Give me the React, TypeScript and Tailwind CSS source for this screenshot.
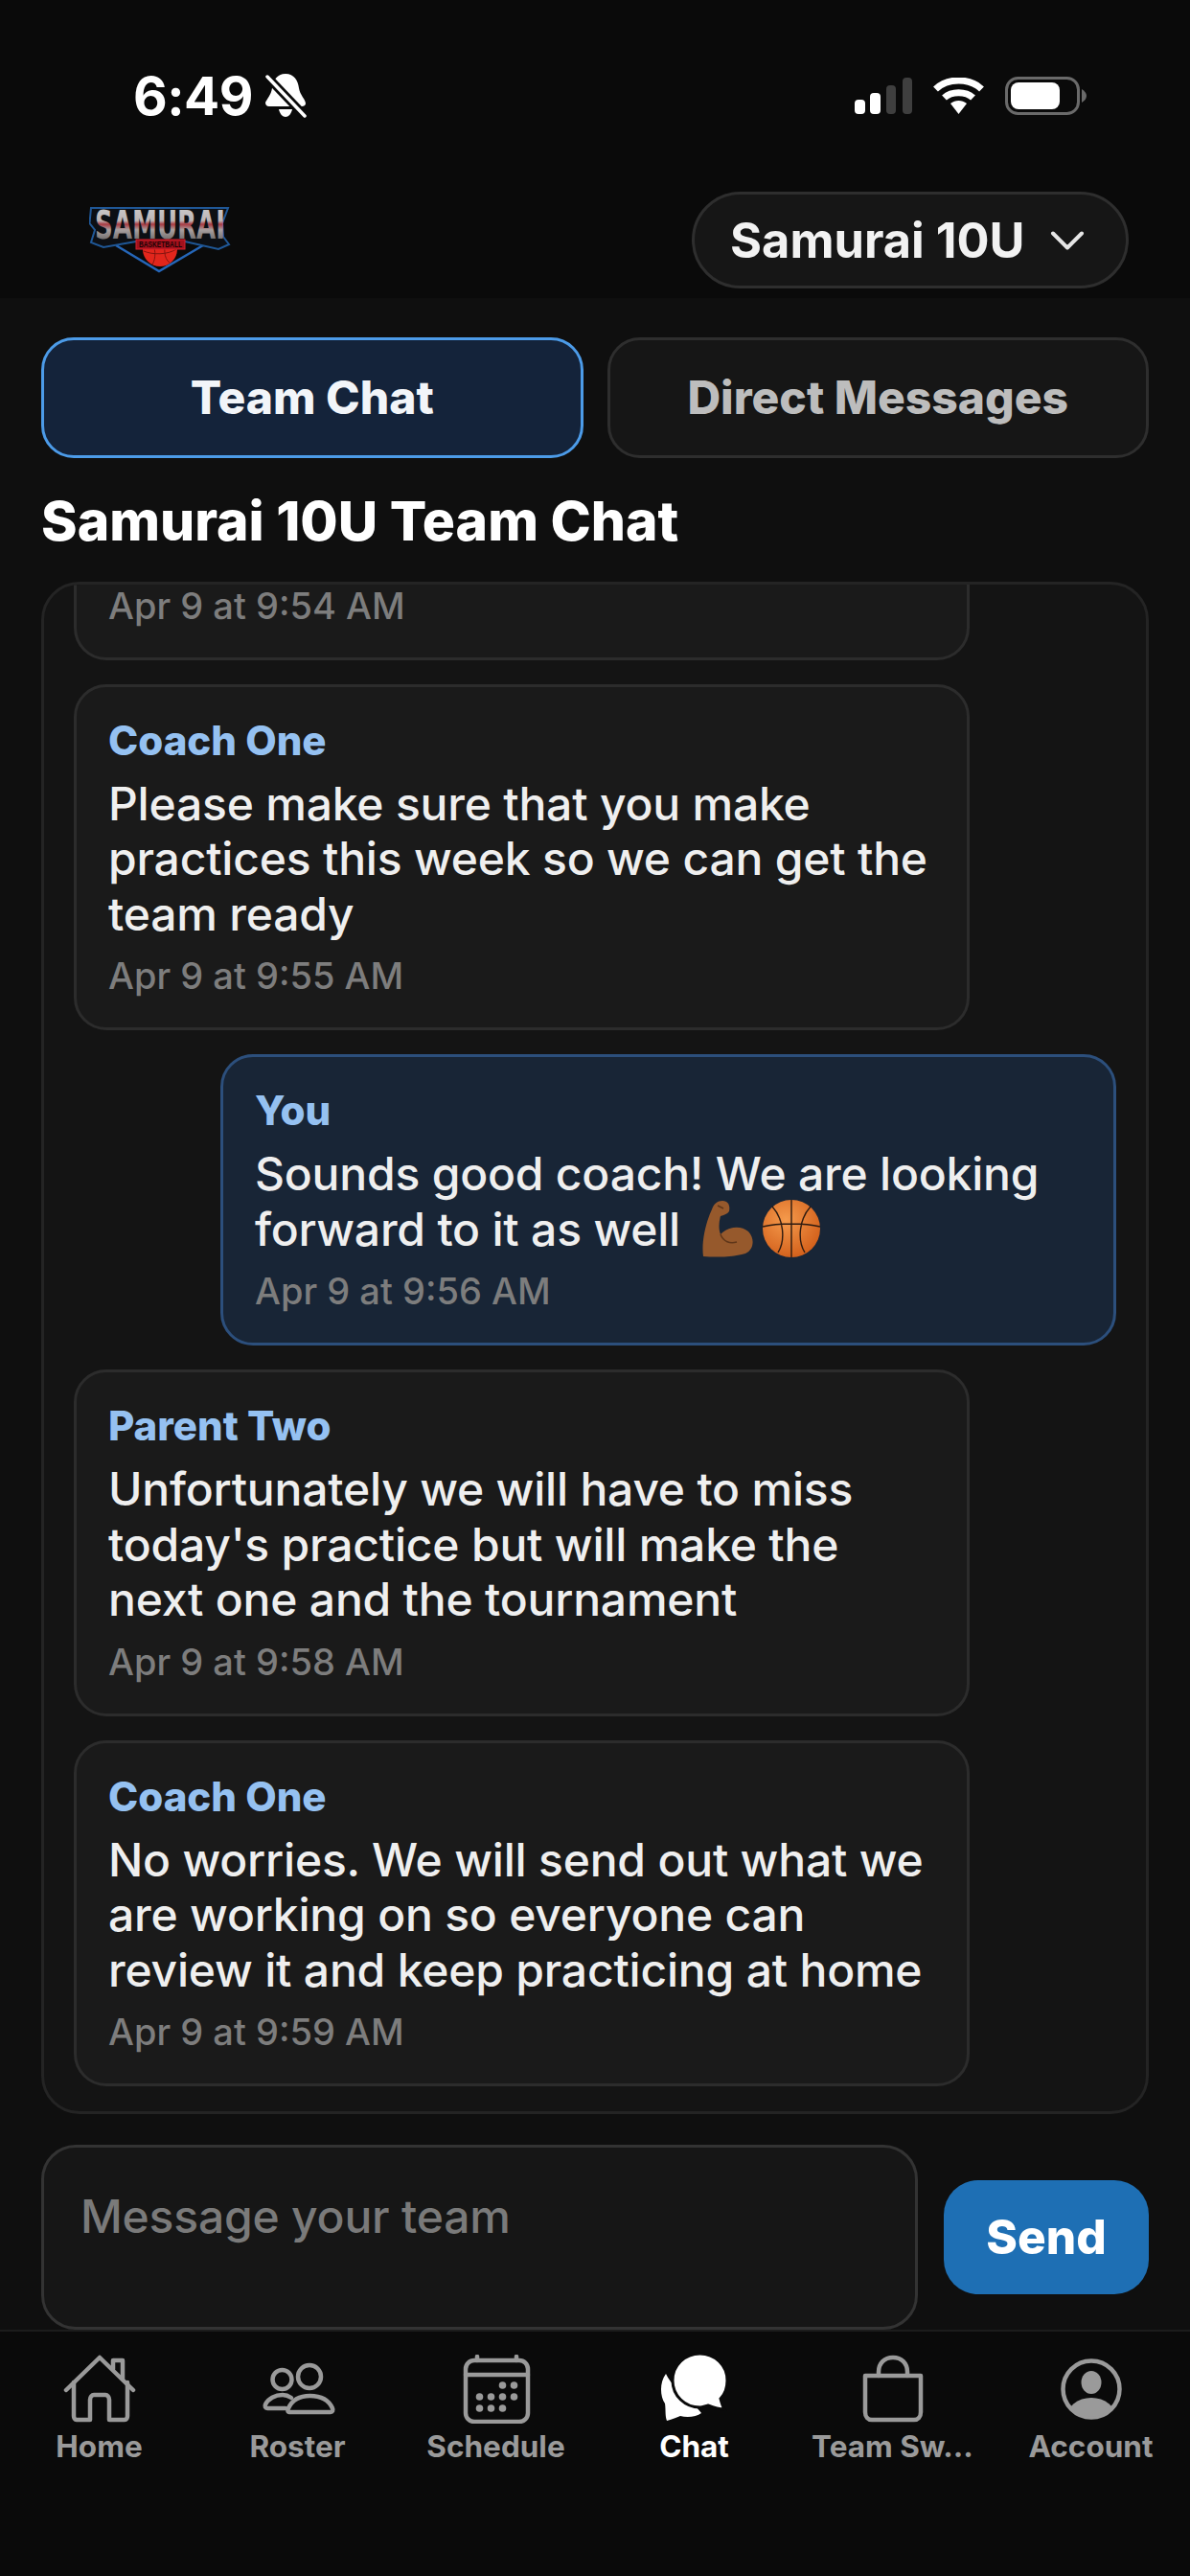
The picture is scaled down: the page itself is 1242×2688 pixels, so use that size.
import { ChevronDown } from "lucide-react";

const FONT = "font-['Inter','Noto_Sans',sans-serif]";

type Msg = {
  sender?: string;
  lines?: string;
  time: string;
  mine?: boolean;
  emoji?: boolean;
};

const MESSAGES: Msg[] = [
  { time: "Apr 9 at 9:54 AM" },
  { sender: "Coach One", lines: "Please make sure that you make practices this week so we can get the team ready", time: "Apr 9 at 9:55 AM" },
  { sender: "You", lines: "Sounds good coach! We are looking forward to it as well ", time: "Apr 9 at 9:56 AM", mine: true, emoji: true },
  { sender: "Parent Two", lines: "Unfortunately we will have to miss today's practice but will make the next one and the tournament", time: "Apr 9 at 9:58 AM" },
  { sender: "Coach One", lines: "No worries. We will send out what we are working on so everyone can review it and keep practicing at home", time: "Apr 9 at 9:59 AM" },
];

function Logo() {
  return (
    <svg width="148" height="70" viewBox="0 0 148 70" fill="none">
      <defs>
        <linearGradient id="samurai-fill" x1="0" y1="0" x2="0" y2="1">
          <stop offset="0" stopColor="#cfcfcf" />
          <stop offset="0.4" stopColor="#bdb6b6" />
          <stop offset="0.48" stopColor="#a83a42" />
          <stop offset="0.6" stopColor="#a8a0a0" />
          <stop offset="1" stopColor="#444444" />
        </linearGradient>
      </defs>
      <path d="M28 40 L73 67 L119 40" stroke="#2566b8" strokeWidth="2.5" />
      <circle cx="74" cy="44" r="18" fill="#e2261c" />
      <path d="M57 46 C66 50 82 50 91 44 M64 33 C70 42 70 54 66 60 M82 33 C77 42 78 54 84 58" stroke="#7c130e" strokeWidth="0.9" />
      <path
        d="M2 1 H145 L139 17 L140 31 L146 39 L135 44 L100 36 H49 L15 42 L2 37 L6 24 L0.5 17 Z"
        fill="#0c0f14"
        stroke="#1f5796"
        strokeWidth="2"
      />
      <text
        x="6"
        y="33"
        textLength="136"
        lengthAdjust="spacingAndGlyphs"
        fontFamily="'DejaVu Sans', sans-serif"
        fontWeight="700"
        fontSize="41"
        fill="url(#samurai-fill)"
      >
        SAMURAI
      </text>
      <rect x="49" y="34" width="51" height="10" fill="#a3111c" stroke="#d4202c" strokeWidth="1" />
      <text
        x="52"
        y="42"
        textLength="45"
        lengthAdjust="spacingAndGlyphs"
        fontFamily="'Liberation Sans', sans-serif"
        fontWeight="700"
        fontSize="8.5"
        fill="#1a0305"
      >
        BASKETBALL
      </text>
    </svg>
  );
}

function StatusBar() {
  return (
    <div className="flex h-[200px] items-center justify-between pl-[139px] pr-[108px]">
      <div className="flex items-center gap-[12px]">
        <span className="text-[55px] leading-none font-bold tracking-[-0.5px] text-white">6:49</span>
        <svg width="44" height="46" viewBox="0 0 44 46" className="fill-white">
          <path d="M22 0 C31 0 35 7 36 15 C37 22 43 27 43 31 C43 33 41 34 39 34 H5 C2 34 1 32 1 30 C2 27 7 22 8 15 C9 7 13 0 22 0 Z" />
          <path d="M15 37 H29 C28 42 25 45 22 45 C19 45 16 42 15 37 Z" />
          <path d="M2 2 L42 44" stroke="#0a0a0a" strokeWidth="9" />
          <path d="M3 3 L42 44" stroke="white" strokeWidth="3.5" strokeLinecap="round" />
        </svg>
      </div>
      <div className="flex items-center gap-[22px]">
        <svg width="60" height="38" viewBox="0 0 60 38">
          <rect x="0" y="23" width="11" height="15" rx="4" fill="#fff" />
          <rect x="16" y="16" width="11" height="22" rx="4" fill="#fff" />
          <rect x="33" y="8" width="10" height="30" rx="4" fill="#3f3f3f" />
          <rect x="50" y="0" width="10" height="38" rx="4" fill="#3f3f3f" />
        </svg>
        <svg width="53" height="38" viewBox="0 0 53 38" fill="none" stroke="#fff" strokeWidth="7">
          <path d="M2.5 12 C15 0 38 0 50.5 12" />
          <path d="M11.5 21 C19 14 34 14 41.5 21" />
          <path d="M18 27 C23 23 30 23 35 27 L26.5 38 Z" fill="#fff" strokeWidth="0" />
        </svg>
        <svg width="85" height="40" viewBox="0 0 85 40">
          <rect x="1.5" y="1.5" width="75" height="37" rx="12" fill="none" stroke="#6a6a6a" strokeWidth="3" />
          <rect x="6" y="6" width="51" height="28" rx="8" fill="#fff" />
          <path d="M80 13 C83 15 85 17 85 20 C85 23 83 25 80 27 Z" fill="#6a6a6a" />
        </svg>
      </div>
    </div>
  );
}

function Bicep() {
  return (
    <svg width="56" height="60" viewBox="0 0 56 60" className="inline-block align-middle">
      <path
        d="M3 59 C1 45 5 25 12 10 C14 4 18 1 23 1 C30 1 31 7 30 12 C28 15 24 16 21 17 C19 24 19 31 21 36 C28 28 42 26 50 33 C57 40 56 52 47 56 C33 60 16 60 3 59 Z"
        fill="#96592c"
      />
      <path d="M21 36 C24 44 31 46 38 44 M18 6 L24 9" stroke="#5f3619" strokeWidth="1.5" fill="none" />
    </svg>
  );
}

function Ball() {
  return (
    <svg width="60" height="60" viewBox="0 0 60 60" className="inline-block align-middle">
      <defs>
        <radialGradient id="ball-fill" cx="0.4" cy="0.35" r="0.75">
          <stop offset="0" stopColor="#f59a4c" />
          <stop offset="1" stopColor="#cf5a16" />
        </radialGradient>
      </defs>
      <circle cx="30" cy="30" r="30" fill="url(#ball-fill)" />
      <path
        d="M30 0 V60 M0 28 C16 24 44 24 60 28 M10 7 C22 20 24 42 16 55 M50 7 C38 20 36 42 44 55"
        stroke="#2c1a10"
        strokeWidth="1.4"
        fill="none"
      />
    </svg>
  );
}

function Bubble({ msg }: { msg: Msg }) {
  return (
    <div
      className={`w-[935px] shrink-0 rounded-[34px] border-[3px] px-[33px] pt-[28px] pb-[29px] ${
        msg.mine
          ? "self-end border-[#2c4f7c] bg-[#182536]"
          : "self-start border-[#2c2c2c] bg-[#1a1a1a]"
      }`}
    >
      {msg.sender ? (
        <>
          <div className="text-[42px] leading-[56px] font-extrabold text-[#95c1f1]">{msg.sender}</div>
          <div className="mt-[9px] text-[48px] leading-[57.5px] font-[450] tracking-[-0.2px] text-[#efefef]">
            {msg.lines}
            {msg.emoji && (
              <span className="ml-[8px] inline-flex h-[57px] items-center gap-[9px] align-top">
                <Bicep />
                <Ball />
              </span>
            )}
          </div>
        </>
      ) : (
        <div className="h-[100px]" />
      )}
      <div className="mt-[11px] text-[38px] leading-[50px] font-medium text-[#7d7d7d]">{msg.time}</div>
    </div>
  );
}

const iconStroke = {
  fill: "none",
  stroke: "#9a9a9a",
  strokeWidth: 4.5,
  strokeLinecap: "round" as const,
  strokeLinejoin: "round" as const,
};

function HomeIcon() {
  return (
    <svg width="80" height="72" viewBox="0 0 80 72" {...iconStroke}>
      <path d="M5 37 L40 3 L75 37" />
      <path d="M13 29 V64 C13 66 14 68 16 68 H30 V47 C30 44 32 42 34 42 H46 C48 42 50 44 50 47 V68 H66 C68 68 69 66 69 64 V29" />
      <path d="M54 15 V6 H64 V25" />
    </svg>
  );
}

function RosterIcon() {
  return (
    <svg width="80" height="72" viewBox="0 0 80 72" {...iconStroke}>
      <circle cx="23.5" cy="26" r="10" />
      <circle cx="52" cy="23" r="12" />
      <path d="M31 60 H74 C76 60 77 58 76 56 C72 47 63 43 52.5 43 C42 43 34 47 30 56 C29 58 29 60 31 60 Z" />
      <path d="M33 45 C30 43 27 42 24 42 C16 42 9 46 6 52 C5 54 6 56 8 56 H27" />
    </svg>
  );
}

function ScheduleIcon() {
  const dots = [
    [46.5, 32], [58.5, 32],
    [22.5, 44], [34.5, 44], [46.5, 44], [58.5, 44],
    [22.5, 56], [34.5, 56], [46.5, 56],
  ];
  return (
    <svg width="80" height="72" viewBox="0 0 80 72" {...iconStroke}>
      <rect x="8" y="6" width="65" height="64" rx="9" />
      <path d="M8 21 H73 M20 2 V6 M61 2 V6" />
      {dots.map(([cx, cy]) => (
        <circle key={`${cx}-${cy}`} cx={cx} cy={cy} r="3.8" fill="#9a9a9a" stroke="none" />
      ))}
    </svg>
  );
}

function ChatIcon() {
  return (
    <svg width="80" height="72" viewBox="0 0 80 72" className="overflow-visible">
      <path
        d="M10 20 C3 29 4 44 9 51 C10 58 9 64 11 69 C17 67 21 66 25 64 C32 66 42 65 47 61 C40 50 20 40 10 20 Z"
        fill="#fff"
      />
      <path
        d="M45.5 -1 C61 -1 74 11 74 27 C74 36 71 42 67 46 C68 50 69 54 71 57 C65 57 59 55 54 53 C50 54 48 55 45.5 55 C30 55 17 43 17 27 C17 11 30 -1 45.5 -1 Z"
        fill="#fff"
        stroke="#0a0a0a"
        strokeWidth="3"
      />
    </svg>
  );
}

function BagIcon() {
  return (
    <svg width="80" height="72" viewBox="0 0 80 72" {...iconStroke}>
      <path d="M11 22 H69 V60 C69 65 66 68 62 68 H18 C14 68 11 65 11 60 Z" />
      <path d="M25 22 V18 C25 9 31 3 40 3 C49 3 55 9 55 18 V22" />
    </svg>
  );
}

function AccountIcon() {
  return (
    <svg width="80" height="72" viewBox="0 0 80 72">
      <defs>
        <clipPath id="account-clip">
          <circle cx="40" cy="36" r="29" />
        </clipPath>
      </defs>
      <circle cx="40" cy="36" r="29.5" fill="none" stroke="#9a9a9a" strokeWidth="4.5" />
      <ellipse cx="40" cy="29" rx="10.5" ry="12" fill="#9a9a9a" />
      <ellipse cx="40" cy="66" rx="26" ry="21" fill="#9a9a9a" clipPath="url(#account-clip)" />
    </svg>
  );
}

const TABS = [
  { label: "Home", icon: <HomeIcon /> },
  { label: "Roster", icon: <RosterIcon /> },
  { label: "Schedule", icon: <ScheduleIcon /> },
  { label: "Chat", icon: <ChatIcon />, active: true },
  { label: "Team Sw...", icon: <BagIcon /> },
  { label: "Account", icon: <AccountIcon /> },
];

export default function App() {
  return (
    <div className={`flex h-[2688px] w-[1242px] flex-col overflow-hidden bg-[#0a0a0a] ${FONT}`}>
      <StatusBar />

      <header className="flex h-[112px] items-start justify-between border-b border-[#0e0e0e] pr-[64px] pl-[93px]">
        <div className="mt-[16px]">
          <Logo />
        </div>
        <button className="flex h-[101px] w-[456px] items-center gap-[14px] rounded-full border-[3px] border-[#2e2e2e] bg-[#161616] pl-[37px] text-[50.5px] font-bold text-[#f2f2f2]">
          Samurai 10U
          <ChevronDown size={60} strokeWidth={1.6} className="text-[#e6e6e6]" />
        </button>
      </header>

      <main className="flex min-h-0 flex-1 flex-col bg-[#0f0f0f] px-[43px] pt-[40px]">
        <div className="flex gap-[25px]">
          <button className="h-[126px] flex-1 rounded-[34px] border-[3px] border-[#4c9be8] bg-[#14233a] text-[48px] font-extrabold text-[#f2f5f9]">
            Team Chat
          </button>
          <button className="h-[126px] flex-1 rounded-[34px] border-[3px] border-[#2e2e2e] bg-[#161616] text-[48px] font-extrabold text-[#bdbdbd]">
            Direct Messages
          </button>
        </div>

        <h1 className="mt-[30px] text-[57px] leading-[72px] font-extrabold text-white">Samurai 10U Team Chat</h1>

        <section className="mt-[27px] flex h-[1599px] flex-col justify-end gap-[25px] overflow-hidden rounded-[40px] border-[3px] border-[#242424] bg-[#141414] px-[31px] pb-[26px]">
          {MESSAGES.map((m) => (
            <Bubble key={m.time} msg={m} />
          ))}
        </section>

        <div className="mt-[32px] flex items-center gap-[27px]">
          <textarea
            readOnly
            placeholder="Message your team"
            className="h-[193px] w-[915px] resize-none rounded-[36px] border-[3px] border-[#333333] bg-[#161616] px-[38px] pt-[43px] text-[48px] leading-[58px] font-[450] tracking-[-0.2px] outline-none placeholder:text-[#7a7a7a]"
          />
          <button className="h-[119px] flex-1 rounded-[36px] bg-[#1e6fb4] text-[49.5px] font-extrabold text-white">Send</button>
        </div>
      </main>

      <nav className="grid h-[257px] grid-cols-6 border-t-[2px] border-[#1c1c1c] bg-[#0a0a0a] pt-[24px]">
        {TABS.map((t) => (
          <div key={t.label} className="flex flex-col items-center">
            {t.icon}
            <span className={`mt-[2px] text-[31.5px] leading-[44px] font-bold whitespace-nowrap ${t.active ? "text-white" : "text-[#9a9a9a]"}`}>
              {t.label}
            </span>
          </div>
        ))}
      </nav>
    </div>
  );
}
